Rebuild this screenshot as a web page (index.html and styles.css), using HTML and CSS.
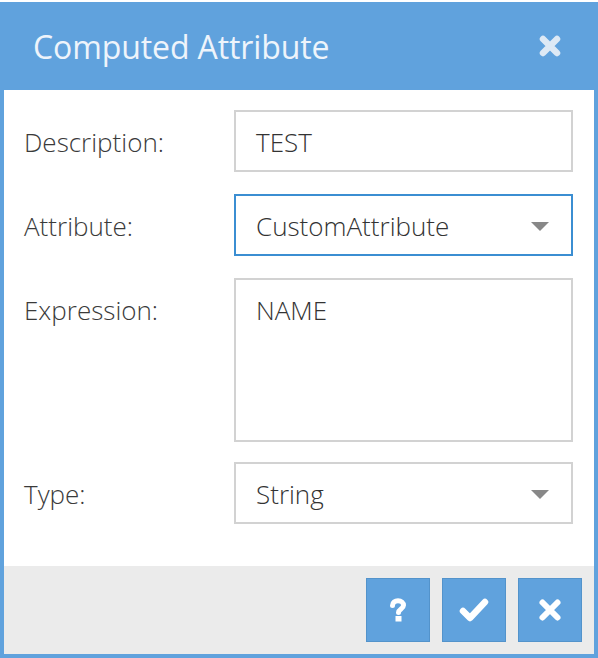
FILE: index.html
```html
<!doctype html>
<html lang="en">
<head>
	<meta charset="UTF-8"/>
	<title>Computed Attribute</title>
	<link rel="stylesheet" href="styles.css">
</head>
<body>
	<div class="dialog">
		<div class="dlgHead">
			<h1 class="dlgTitle">Computed Attribute</h1>
			<a href="#" class="dlgClose">
				<svg width="22" height="22" viewBox="0 0 22 22"><path d="M4 4 L18 18 M18 4 L4 18" stroke="currentColor" stroke-width="6.5" stroke-linecap="round"/></svg>
			</a>
		</div>
		<div class="dlgBody">
			<div class="row">
				<label class="lbl">Description:</label>
				<div class="field">TEST</div>
			</div>
			<div class="row">
				<label class="lbl">Attribute:</label>
				<div class="field select focus">CustomAttribute<span class="arrow"></span></div>
			</div>
			<div class="row rowArea">
				<label class="lbl">Expression:</label>
				<div class="field area">NAME</div>
			</div>
			<div class="row">
				<label class="lbl">Type:</label>
				<div class="field select">String<span class="arrow"></span></div>
			</div>
		</div>
		<div class="dlgFoot">
			<a href="#" class="btn" title="Help">
				<svg width="18" height="24" viewBox="0 0 18 24"><path d="M3.5 7.5 C3.5 4.5 6 2.8 9 2.8 C12.3 2.8 14.5 4.8 14.5 7.3 C14.5 10.8 9.5 11 9.5 14.5" fill="none" stroke="currentColor" stroke-width="5" stroke-linecap="round"/><rect x="6.5" y="18" width="6" height="5.5" fill="currentColor"/></svg>
			</a>
			<a href="#" class="btn" title="OK">
				<svg width="30" height="24" viewBox="0 0 30 24"><path d="M4 13 L11 20 L26 4" fill="none" stroke="currentColor" stroke-width="6.5" stroke-linecap="round" stroke-linejoin="round"/></svg>
			</a>
			<a href="#" class="btn" title="Cancel">
				<svg width="24" height="24" viewBox="0 0 24 24"><path d="M4.5 4.5 L19.5 19.5 M19.5 4.5 L4.5 19.5" stroke="currentColor" stroke-width="6" stroke-linecap="round"/></svg>
			</a>
		</div>
	</div>
</body>
</html>
```
FILE: styles.css
```css
*				{ padding:0; margin:0; box-sizing:border-box; }
body			{ background:#fff; font-family:"Open Sans", "Liberation Sans", sans-serif; color:#333; }
a				{ text-decoration:none; }

.dialog			{ margin-top:2px; width:598px; background:#60a2dd; padding:0 4px 4px; }
.dlgHead		{ height:88px; margin:0 -4px; display:flex; align-items:center; justify-content:space-between; padding:0 37px 0 33px; }
.dlgTitle		{ font-size:32px; font-weight:400; color:#eef4fb; letter-spacing:-0.1px; }
.dlgClose		{ display:flex; color:#dde9f5; }

.dlgBody		{ background:#fff; padding:20px 21px 42px 20px; }
.row			{ display:flex; align-items:flex-start; margin-bottom:22px; }
.row:last-child	{ margin-bottom:0; }
.rowArea		{ margin-bottom:20px; }
.lbl			{ width:210px; height:62px; flex:none; font-size:26px; font-weight:300; line-height:64px; color:#3a3a3a; }
.field			{ position:relative; flex:1; height:62px; border:2px solid #d2d2d2; padding:0 20px; font-size:26px; font-weight:300; line-height:60px; color:#333; }
.field.focus	{ border-color:#3b8ed2; }
.field.area		{ height:164px; }
.arrow			{ position:absolute; right:22px; top:26px; width:0; height:0; border-left:9px solid transparent; border-right:9px solid transparent; border-top:9px solid #888; }

.dlgFoot		{ height:88px; background:#ebebeb; display:flex; justify-content:flex-end; align-items:center; gap:12px; padding-right:12px; }
.btn			{ width:64px; height:64px; background:#60a2dd; border:1px solid #5393cb; color:#fff; display:flex; align-items:center; justify-content:center; }
```
